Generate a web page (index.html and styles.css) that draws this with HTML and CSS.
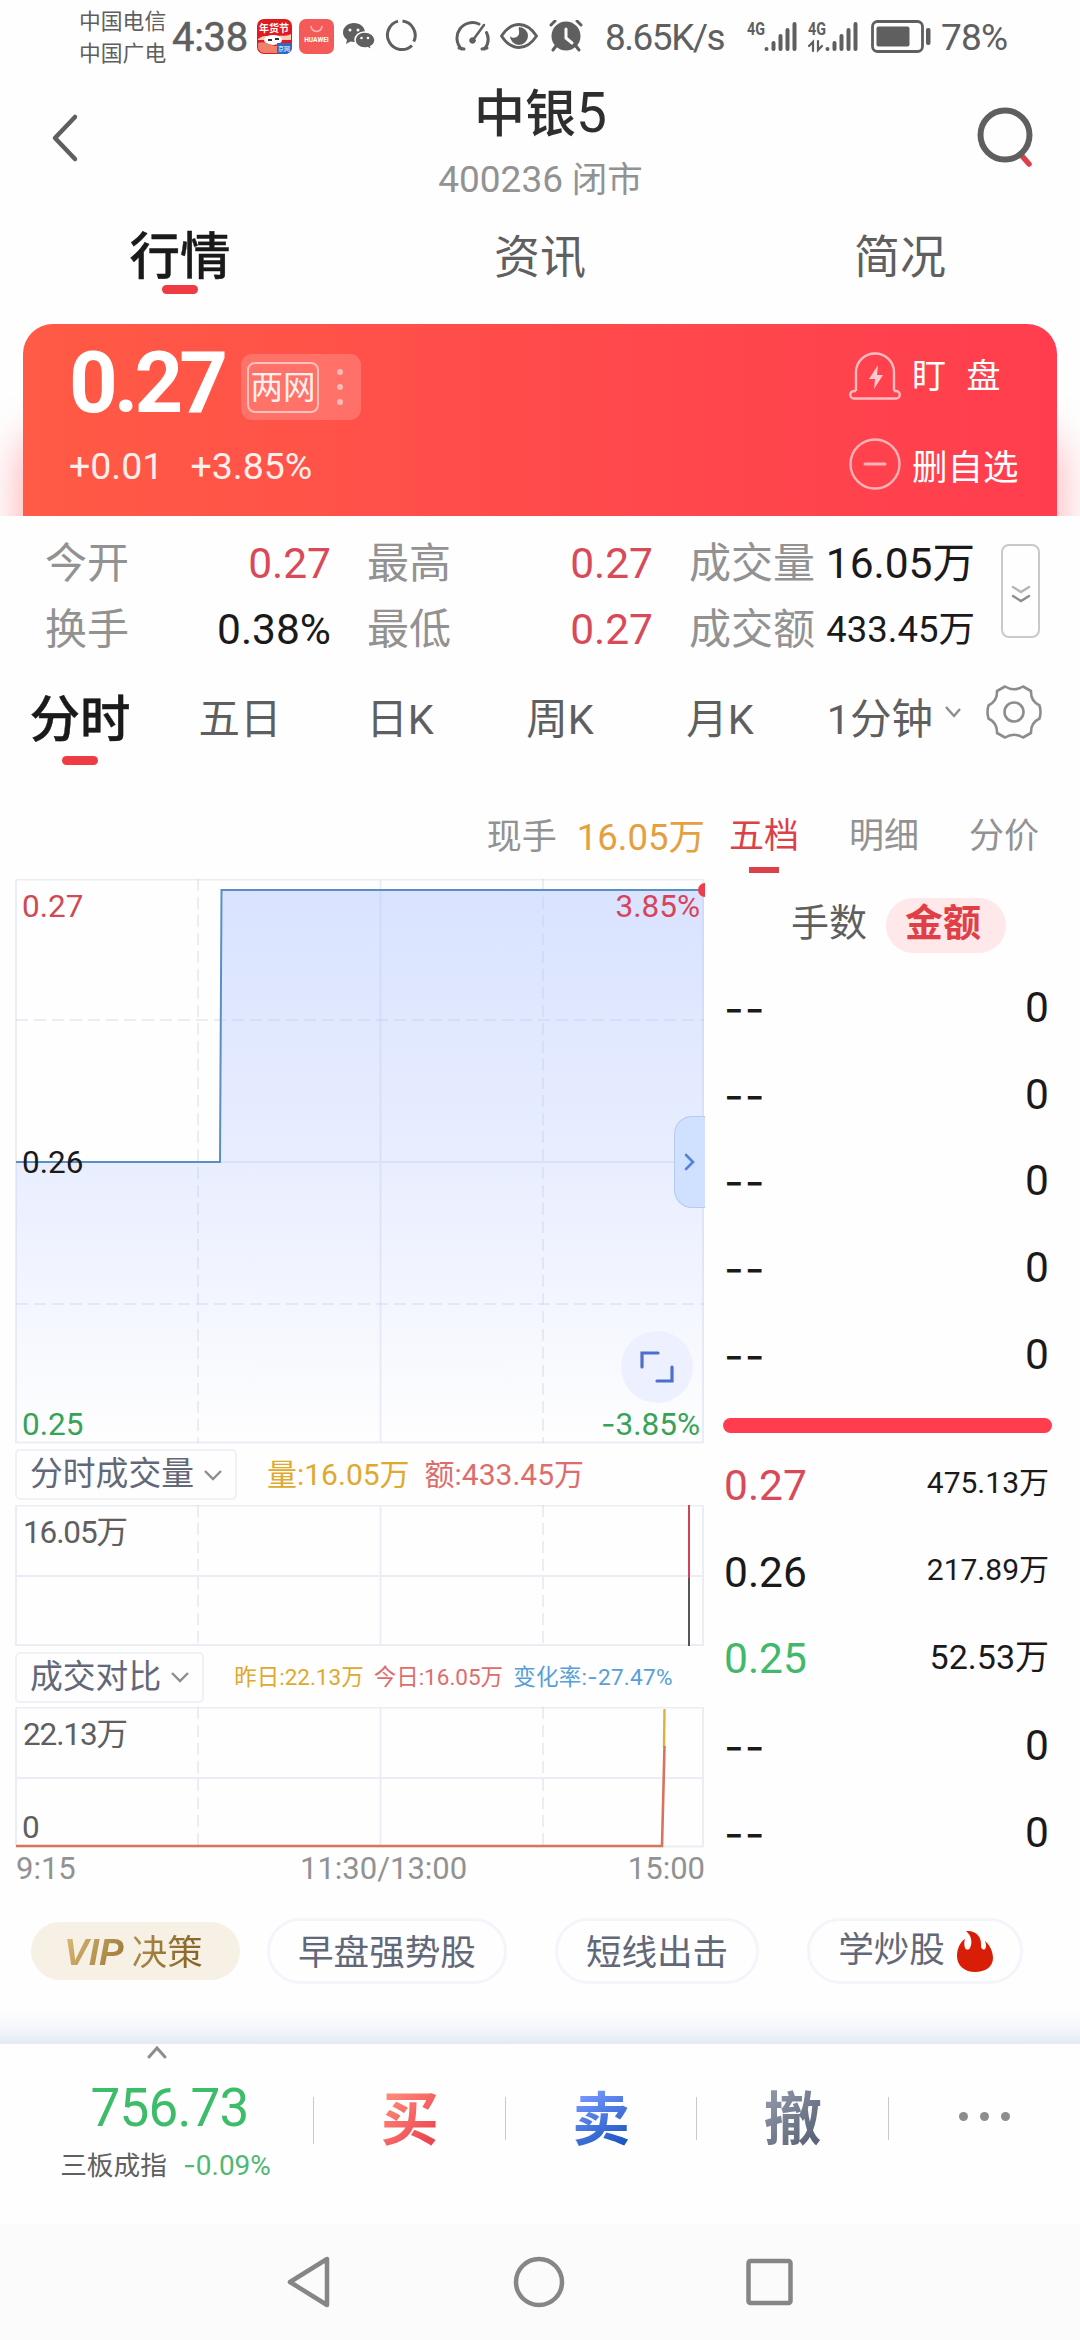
FILE: index.html
```html
<!DOCTYPE html>
<html lang="zh-CN">
<head>
  <meta charset="UTF-8">
  <meta name="viewport" content="width=device-width, initial-scale=1.0">
  <title>中银5 400236</title>
  <link rel="stylesheet" href="styles.css">
</head>
<body>
  <!-- Status bar -->
  <div class="status-bar">
    <div class="carriers"><span>中国电信</span><span>中国广电</span></div>
    <span class="clock">4:38</span>
    <svg class="app-icon" width="35" height="35" viewBox="0 0 35 35">
      <rect width="35" height="35" rx="7" fill="#e01a20"/>
      <path d="M1 20c6-5 12-2 17-3s10 1 16-2v6H1z" fill="#f9c9b8"/>
      <ellipse cx="16" cy="21" rx="9" ry="5" fill="#fff"/>
      <path d="M11 21h4M18 20h4" stroke="#333" stroke-width="2"/>
      <path d="M1 24c8-3 14 4 20 3v7H7a7 7 0 0 1-6-5z" fill="#f0806a"/>
      <path d="M20 24h15v4a7 7 0 0 1-7 7h-8z" fill="#2f67c4"/>
      <text x="17" y="13" font-size="10" font-weight="700" fill="#fff" text-anchor="middle">年货节</text>
      <text x="27" y="32" font-size="6" fill="#fff" text-anchor="middle">京网</text>
    </svg>
    <svg class="app-icon huawei" width="35" height="35" viewBox="0 0 35 35">
      <rect width="35" height="35" rx="7" fill="#f45b58"/>
      <path d="M12 7a5.500 5.500 0 0 0 11 0" fill="none" stroke="#fbb" stroke-width="1.500"/>
      <text x="17.500" y="23" font-size="6.600" font-weight="700" fill="#fff" text-anchor="middle">HUAWEI</text>
    </svg>
    <svg class="wechat" width="32" height="28" viewBox="0 0 32 28" fill="#5f5f5f">
      <path d="M11 0C4.900 0 0 4.200 0 9.500c0 3 1.500 5.500 4 7.300L3 21l4.500-2.600c1 .3 2.300.5 3.500.5C17 18.900 22 15 22 9.500S17 0 11 0z"/>
      <path d="M21.500 9C16 9 12 12.700 12 17s4 8 9.500 8c1 0 2-.1 3-.4l4.300 2.400-1-3.500c2.500-1.500 4.200-3.800 4.200-6.500 0-4.300-4.500-8-10.500-8z" stroke="#fefefe" stroke-width="1.500"/>
      <g fill="#fefefe"><circle cx="7" cy="7" r="1.500"/><circle cx="15" cy="7" r="1.500"/><circle cx="18.500" cy="15" r="1.300"/><circle cx="25" cy="15" r="1.300"/></g>
    </svg>
    <svg class="ring" width="33" height="34" viewBox="0 0 33 34" fill="none" stroke="#5f5f5f" stroke-width="3">
      <path d="M18.500 2.100A14.500 14.500 0 0 1 29.800 22.700M28 26.500A14.500 14.500 0 1 1 14 2.100"/>
    </svg>
    <svg class="speed" width="36" height="32" viewBox="0 0 36 32" fill="none" stroke="#5f5f5f" stroke-width="3" stroke-linecap="round">
      <path d="M6.500 29A15.500 15.500 0 0 1 24 4M31.500 12.500A15.500 15.500 0 0 1 29.500 29"/>
      <path d="M4 28l5 1M27 29l5-1"/>
      <path d="M18 20L29 5" stroke-width="2.500"/>
      <circle cx="17.500" cy="20.500" r="2.800" fill="#5f5f5f" stroke-width="1"/>
    </svg>
    <svg class="eye" width="38" height="26" viewBox="0 0 38 26">
      <path d="M1.500 13Q9 1.500 19 1.500T36.500 13Q29 24.500 19 24.500T1.500 13z" fill="none" stroke="#5f5f5f" stroke-width="2.800"/>
      <path d="M19 4a9 9 0 1 1-9 9c2 3 8 2 9-2 .6-3-1-5.500 0-7z" fill="#5f5f5f"/>
    </svg>
    <svg class="alarm" width="34" height="32" viewBox="0 0 34 32" stroke="#5f5f5f" stroke-width="3" stroke-linecap="round">
      <circle cx="17" cy="16" r="14.500" fill="#5f5f5f" stroke="none"/>
      <path d="M2 5l4-4M32 5l-4-4M7 26l-3 4M27 26l3 4"/>
      <path d="M17 9v9l6 5" fill="none" stroke="#fefefe"/>
    </svg>
    <span class="net-speed">8.65K/s</span>
    <svg class="signal" width="51" height="33" viewBox="0 0 51 33" stroke="#5f5f5f" stroke-width="4" stroke-linecap="round">
      <text x="0" y="15" class="net-type" textLength="18" lengthAdjust="spacingAndGlyphs">4G</text>
      <path d="M19.500 29v0M26.500 23v6M33.500 16v13M40.500 10v19M47.500 4v25"/>
    </svg>
    <svg class="signal signal-2" width="51" height="33" viewBox="0 0 51 33" stroke="#5f5f5f" stroke-width="4" stroke-linecap="round">
      <text x="0" y="15" class="net-type" textLength="18" lengthAdjust="spacingAndGlyphs">4G</text>
      <path d="M5 31V22l-4 4M10 21v9l4-4" fill="none" stroke-width="2.200"/>
      <path d="M19.500 29v0M26.500 23v6M33.500 16v13M40.500 10v19M47.500 4v25"/>
    </svg>
    <svg class="battery" width="60" height="34" viewBox="0 0 60 34">
      <rect x="1.500" y="1.500" width="50" height="30" rx="5" fill="none" stroke="#5f5f5f" stroke-width="2.800"/>
      <rect x="5.500" y="6.500" width="33" height="20" rx="2" fill="#5f5f5f"/>
      <rect x="55" y="8" width="4.500" height="17" rx="2" fill="#5f5f5f"/>
    </svg>
    <span class="battery-text">78%</span>
  </div>

  <!-- Header -->
  <header class="header">
    <svg class="back" width="30" height="50" viewBox="0 0 30 50" fill="none" stroke="#5f5f5f" stroke-width="4.500" stroke-linecap="round" stroke-linejoin="round">
      <path d="M25 4L5 25l20 21"/>
    </svg>
    <div class="title">
      <h1>中银<span>5</span></h1>
      <p><span class="num">400236</span> 闭市</p>
    </div>
    <svg class="search" width="58" height="62" viewBox="0 0 58 62" fill="none" stroke-width="6">
      <path d="M45 49l7 8" stroke="#dc4048" stroke-width="5.500" stroke-linecap="round"/>
      <circle cx="28" cy="28" r="24.500" stroke="#5f5f5f"/>
    </svg>
  </header>

  <nav class="page-tabs">
    <a class="active">行情</a>
    <a>资讯</a>
    <a>简况</a>
  </nav>

  <!-- Price card -->
  <div class="hero-wrap">
    <section class="hero">
      <div class="hero-left">
        <div class="price-row">
          <span class="price">0.27</span>
          <div class="market">
            <span class="market-name">两网</span>
            <span class="market-dots"><i></i><i></i><i></i></span>
          </div>
        </div>
        <div class="change"><span>+0.01</span><span>+3.85%</span></div>
      </div>
      <div class="hero-actions">
        <div class="action">
          <svg width="52" height="48" viewBox="0 0 52 48" fill="none" stroke="rgba(255,255,255,.65)" stroke-width="2.400" stroke-linejoin="round">
            <path d="M7 39V20a19 18.500 0 0 1 38 0v19M7 39H5a3.700 3.700 0 0 0 0 7.500h42a3.700 3.700 0 0 0 0-7.500h-2"/>
            <path d="M29 13l-9 14h6l-1 10 9-14h-6z" fill="#ffc9cd" stroke="none"/>
          </svg>
          <span class="wide">盯&nbsp;盘</span>
        </div>
        <div class="action">
          <svg width="52" height="54" viewBox="0 0 52 54" fill="none" stroke="rgba(255,255,255,.6)" stroke-width="2.400">
            <circle cx="26" cy="27" r="24.500"/>
            <path d="M16 27h20" stroke-width="3" stroke-linecap="round"/>
          </svg>
          <span>删自选</span>
        </div>
      </div>
    </section>
  </div>

  <section class="stats">
    <dl>
      <div><dt>今开</dt><dd class="up">0.27</dd></div>
      <div><dt>换手</dt><dd>0.38%</dd></div>
    </dl>
    <dl>
      <div><dt>最高</dt><dd class="up">0.27</dd></div>
      <div><dt>最低</dt><dd class="up">0.27</dd></div>
    </dl>
    <dl>
      <div><dt>成交量</dt><dd>16.05万</dd></div>
      <div><dt>成交额</dt><dd class="small">433.45万</dd></div>
    </dl>
    <button class="expand">
      <svg width="20" height="20" viewBox="0 0 20 20" fill="none" stroke-width="2.400" stroke-linecap="round">
        <path d="M2 3l8 5 8-5" stroke="#b5b5b5"/>
        <path d="M2 12l8 5 8-5" stroke="#8d8d8d"/>
      </svg>
    </button>
  </section>

  <nav class="chart-tabs">
    <a class="active">分时</a>
    <a>五日</a>
    <a>日K</a>
    <a>周K</a>
    <a>月K</a>
    <a class="minute">1分钟<svg width="16" height="14" viewBox="0 0 16 14" fill="none" stroke="#8d8d8d" stroke-width="2.400"><path d="M1 2l8 9 6-7"/></svg></a>
    <svg class="gear" width="56" height="54" viewBox="0 0 56 54" fill="none" stroke="#8d8d8d" stroke-width="2.600" stroke-linejoin="round">
      <path d="M19 1.500Q28 7 37 1.500L45 6Q44.500 16 53.500 20.500Q55.500 27 53.500 33.500Q44.500 38 45 48L37 52.500Q28 47 19 52.500L11 48Q11.500 38 2.500 33.500Q.5 27 2.500 20.500Q11.500 16 11 6z"/>
      <circle cx="28" cy="27" r="9.500"/>
    </svg>
  </nav>

  <main class="trade">
    <!-- Charts -->
    <div class="charts">
      <div class="last-volume"><span>现手</span><span class="orange">16.05万</span></div>

      <div class="chart">
        <svg width="705" height="565" viewBox="0 0 705 565">
          <defs>
            <linearGradient id="area" x1="0" y1="11" x2="0" y2="563" gradientUnits="userSpaceOnUse">
              <stop offset="0" stop-color="#d9e3ff"/>
              <stop offset=".5" stop-color="#e9eeff"/>
              <stop offset="1" stop-color="#fefefe"/>
            </linearGradient>
          </defs>
          <path d="M16 283H220L221.500 11H704V563H16z" fill="url(#area)"/>
          <g class="grid">
            <path d="M16 .5H704M16 .5V564M380.500 .5V564M703 .5V564M16 283H704M16 563.500H704"/>
            <path d="M198 0V564M543 0V564" stroke-dasharray="12 6"/>
            <path d="M16 141H704M16 425H704" stroke-dasharray="12 6"/>
          </g>
          <path d="M16 283H220L221.500 11H704" fill="none" stroke="#5a8fc6" stroke-width="2"/>
          <path d="M705 4a7 7 0 0 0 0 14z" fill="#ef3c4b"/>
          <text x="22" y="38" fill="#cf4a54">0.27</text>
          <text x="700" y="38" fill="#d9435a" text-anchor="end">3.85%</text>
          <text x="22" y="294" fill="#1a1a1a">0.26</text>
          <text x="22" y="556" fill="#36a356">0.25</text>
          <text x="700" y="556" fill="#36a356" text-anchor="end"><tspan class="minus">-</tspan>3.85%</text>
        </svg>
        <span class="drawer">
          <svg width="12" height="18" viewBox="0 0 12 18" fill="none" stroke="#5581dc" stroke-width="2.600" stroke-linecap="round"><path d="M2 2l7 7-7 7"/></svg>
        </span>
        <span class="fullscreen">
          <svg width="34" height="34" viewBox="0 0 34 34" fill="none" stroke="#4c6fcc" stroke-width="3.200" stroke-linecap="round"><path d="M2 17V3h16M32 17v14H17"/></svg>
        </span>
      </div>

      <div class="legend">
        <button class="select">分时成交量<svg width="18" height="12" viewBox="0 0 18 12" fill="none" stroke="#8d8d8d" stroke-width="2.400"><path d="M1 2l8 8 8-8"/></svg></button>
        <span class="yellow gap-wide">量:16.05万</span>
        <span class="salmon">额:433.45万</span>
      </div>
      <svg class="sub-chart" width="705" height="142" viewBox="0 0 705 142">
        <g class="grid">
          <path d="M16 .5H704M16 .5V141M380.500 .5V141M703 .5V141M16 71H704M16 140H704"/>
          <path d="M198 0V141M543 0V141" stroke-dasharray="12 6"/>
        </g>
        <path d="M689 0V73" stroke="#cf4257" stroke-width="2"/>
        <path d="M689 73V141" stroke="#555" stroke-width="2"/>
        <text x="23" y="38" fill="#5f5f5f" textLength="105">16.05万</text>
      </svg>

      <div class="legend legend-small">
        <button class="select">成交对比<svg width="18" height="12" viewBox="0 0 18 12" fill="none" stroke="#8d8d8d" stroke-width="2.400"><path d="M1 2l8 8 8-8"/></svg></button>
        <span class="yellow gap-wide">昨日:22.13万</span>
        <span class="salmon">今日:16.05万</span>
        <span class="blue">变化率:<span class="minus">-</span>27.47%</span>
      </div>
      <svg class="sub-chart" width="705" height="141" viewBox="0 0 705 141">
        <g class="grid">
          <path d="M16 .5H704M16 .5V140M380.500 .5V140M703 .5V140M16 71H704M16 139.500H704"/>
          <path d="M198 0V140M543 0V140" stroke-dasharray="12 6"/>
        </g>
        <path d="M664 40L664.500 2" stroke="#d9b43c" stroke-width="2.400"/>
        <path d="M16 139H662L664.500 39" fill="none" stroke="#d97360" stroke-width="2.600"/>
        <text x="23" y="38" fill="#5f5f5f" textLength="105">22.13万</text>
        <text x="22" y="131" fill="#5f5f5f">0</text>
      </svg>
      <div class="axis"><span>9:15</span><span>11:30/13:00</span><span>15:00</span></div>
    </div>

    <!-- Order book -->
    <aside class="book">
      <nav class="book-tabs">
        <a class="active">五档</a>
        <a>明细</a>
        <a>分价</a>
      </nav>
      <div class="unit"><span>手数</span><b>金额</b></div>
      <ul>
        <li><span class="dash">--</span><span>0</span></li>
        <li><span class="dash">--</span><span>0</span></li>
        <li><span class="dash">--</span><span>0</span></li>
        <li><span class="dash">--</span><span>0</span></li>
        <li><span class="dash">--</span><span>0</span></li>
      </ul>
      <div class="ratio"></div>
      <ul>
        <li><span class="up">0.27</span><span class="amount">475.13万</span></li>
        <li><span>0.26</span><span class="amount">217.89万</span></li>
        <li><span class="down">0.25</span><span class="amount mid">52.53万</span></li>
        <li><span class="dash">--</span><span>0</span></li>
        <li><span class="dash">--</span><span>0</span></li>
      </ul>
    </aside>
  </main>

  <!-- Quick links -->
  <div class="chips">
    <a class="chip vip"><em>VIP</em><span>决策</span></a>
    <a class="chip">早盘强势股</a>
    <a class="chip">短线出击</a>
    <a class="chip fire">学炒股
      <svg width="38" height="42" viewBox="0 0 38 42"><path d="M10 1C20 0 26 7 25 16c0 4 4 5 5 1 .4-2-.5-4-1-6 5 4 8 11 8 17 0 9-8 14-18 14S1 36 1 26C1 18 5 11 9 9c-1 3-1 6 0 9 1 2 4 2 5 0C17 12 15 5 10 1z" fill="#d81e06"/></svg>
    </a>
  </div>
  <div class="dock-shadow"></div>

  <!-- Bottom dock -->
  <footer class="dock">
    <div class="index">
      <svg width="20" height="14" viewBox="0 0 20 14" fill="none" stroke="#8d8d8d" stroke-width="3" stroke-linecap="round"><path d="M2 12l8-9 8 9"/></svg>
      <strong>756.73</strong>
      <p>三板成指<span class="rate"><span class="minus">-</span>0.09%</span></p>
    </div>
    <a class="buy">买</a>
    <a class="sell">卖</a>
    <a class="cancel">撤</a>
    <a class="more"><i></i><i></i><i></i></a>
  </footer>

  <div class="nav-bar">
    <svg width="46" height="54" viewBox="0 0 46 54"><path d="M41 4v46L4 27z"/></svg>
    <svg width="54" height="54" viewBox="0 0 54 54"><circle cx="27" cy="27" r="23"/></svg>
    <svg width="48" height="54" viewBox="0 0 48 54"><rect x="2.500" y="6" width="42" height="42" rx="2"/></svg>
  </div>
</body>
</html>
```
FILE: styles.css
```css
* {
  margin: 0;
  padding: 0;
  box-sizing: border-box;
}

body {
  width: 1080px;
  height: 2340px;
  overflow: hidden;
  background: #fefefe;
  color: #1a1a1a;
  font-family: Roboto, "Noto Sans CJK SC", sans-serif;
  display: flex;
  flex-direction: column;
}

body > * {
  flex: none;
}

svg {
  display: block;
  flex: none;
}

a {
  color: inherit;
  text-decoration: none;
}

button {
  font: inherit;
  background: none;
  border: none;
}

ul {
  list-style: none;
}

.up {
  color: #d94a58;
}

.down {
  color: #42b86c;
}

/* wider hyphen than Roboto has */
.minus {
  font-family: Inter, Roboto, sans-serif;
}

/* Status bar */
.status-bar {
  height: 74px;
  padding-left: 79px;
  display: flex;
  align-items: flex-start;
  color: #5f5f5f;
  white-space: nowrap;
}

.carriers {
  width: 93px;
  padding-top: 6px;
  display: flex;
  flex-direction: column;
  font-size: 21.8px;
  line-height: 32px;
}

.clock {
  width: 85px;
  font-size: 40px;
  line-height: 76px;
  letter-spacing: -0.3px;
  -webkit-text-stroke: 0.5px #5f5f5f;
}

.app-icon {
  margin-top: 19px;
}

.huawei {
  margin-left: 7px;
}

.wechat {
  margin: 23px 0 0 9px;
}

.ring {
  margin: 19px 0 0 9px;
}

.speed {
  margin: 20px 0 0 38px;
}

.eye {
  margin: 23px 0 0 9px;
}

.alarm {
  margin: 20px 0 0 11px;
}

.net-speed {
  width: 142px;
  margin-left: 22px;
  font-size: 37px;
  line-height: 76px;
  letter-spacing: -1.5px;
}

.signal {
  margin-top: 20px;
  overflow: visible;
}

.signal-2 {
  margin-left: 10px;
}

.net-type {
  font-size: 18px;
  font-weight: 700;
  fill: #5f5f5f;
  stroke: none;
}

.battery {
  margin: 20px 10px 0 12px;
}

.battery-text {
  font-size: 37px;
  line-height: 76px;
  letter-spacing: -0.8px;
}

/* Header */
.header {
  height: 137px;
  padding: 0 45px 0 50px;
  display: flex;
  justify-content: space-between;
}

.back {
  margin-top: 39px;
}

.title {
  padding-left: 24px;
  text-align: center;
}

.title h1 {
  font-size: 51px;
  font-weight: 500;
  line-height: 78px;
  color: #2e2e2e;
}

.title h1 span {
  font-size: 55px;
  font-weight: 400;
}

.title p {
  font-size: 35.500px;
  line-height: 52px;
  color: #929292;
}

.title .num {
  font-size: 37px;
}

.search {
  margin-top: 33px;
}

.page-tabs {
  height: 113px;
  display: flex;
  text-align: center;
  font-size: 46px;
  line-height: 92px;
  color: #5f5f5f;
}

.page-tabs a {
  flex: 1;
}

.page-tabs .active {
  font-size: 50.500px;
  font-weight: 500;
  -webkit-text-stroke: 0.4px #1a1a1a;
  color: #1a1a1a;
}

.page-tabs .active::after,
.chart-tabs .active::after {
  content: "";
  display: block;
  width: 36px;
  height: 9px;
  margin: -18px auto 0;
  border-radius: 5px;
  background: #ee3b44;
}

/* Price card */
.hero-wrap {
  height: 192px;
  padding: 0 23px;
  clip-path: inset(0);
}

.hero {
  height: 192px;
  padding: 0 39px 0 48px;
  display: flex;
  justify-content: space-between;
  border-radius: 30px 30px 0 0;
  background: linear-gradient(90deg, #ff5b45, #ff4b4b 50%, #ff3d4e);
  box-shadow: 0 110px 45px 0 rgba(255, 60, 70, 0.45);
  color: #fff;
}

.price-row {
  height: 118px;
  display: flex;
  align-items: center;
}

.price {
  width: 172px;
  margin-left: -2px;
  font-size: 85px;
  font-weight: 700;
  line-height: 116px;
  letter-spacing: -4px;
}

.market {
  width: 120px;
  height: 66px;
  margin-top: 8px;
  padding-left: 6px;
  border-radius: 11px;
  background: rgba(255, 255, 255, 0.18);
  display: flex;
  align-items: center;
}

.market-name {
  width: 72px;
  height: 51px;
  border: 2px solid rgba(255, 255, 255, 0.55);
  border-radius: 8px;
  font-size: 32.500px;
  line-height: 48px;
  text-align: center;
  color: #fff0ef;
}

.market-dots {
  margin-left: 18px;
  display: flex;
  flex-direction: column;
  gap: 9px;
}

.market-dots i {
  width: 6px;
  height: 6px;
  border-radius: 50%;
  background: #ffb9b4;
}

.change {
  display: flex;
  gap: 27px;
  margin-left: -2px;
  font-size: 37.5px;
  line-height: 48px;
  color: #ffeeec;
}

.hero-actions {
  width: 169px;
  padding-top: 28px;
}

.action {
  display: flex;
  align-items: center;
  gap: 11px;
  font-size: 35.5px;
  line-height: 48px;
  white-space: nowrap;
}

.action + .action {
  margin-top: 36px;
}

.action + .action span {
  padding-top: 8px;
}

.action .wide {
  font-size: 34px;
  word-spacing: 12px;
}

/* Day stats */
.stats {
  height: 146px;
  padding: 15px 40px 0 45px;
  display: flex;
  gap: 39px;
}

.stats dl {
  width: 283px;
  flex: none;
}

.stats dl > div {
  display: flex;
  justify-content: space-between;
  line-height: 66px;
  white-space: nowrap;
}

.stats dt {
  font-size: 42px;
  color: #929292;
}

.stats dd {
  margin-right: -3px;
  font-size: 42.5px;
}

.stats .small {
  font-size: 36.5px;
}

.expand {
  width: 39px;
  height: 94px;
  margin: 13px 0 0 -10px;
  border: 2px solid #c9c9c9;
  border-radius: 8px;
  display: flex;
  justify-content: center;
  padding-top: 38px;
}

/* Chart period tabs */
.chart-tabs {
  height: 138px;
  display: flex;
  font-size: 41.5px;
  line-height: 116px;
  text-align: center;
  color: #5f5f5f;
  white-space: nowrap;
}

.chart-tabs a {
  width: 160px;
  flex: none;
}

.chart-tabs .active {
  font-size: 50.500px;
  font-weight: 500;
  -webkit-text-stroke: 0.4px #1a1a1a;
  color: #1a1a1a;
}

.chart-tabs .active::after {
  margin-top: -22px;
}

.chart-tabs .minute {
  width: 161px;
  display: flex;
  justify-content: flex-end;
  gap: 12px;
}

.minute svg {
  margin-top: 43px;
}

.gear {
  margin: 23px 0 0 25px;
}

/* Trade area */
.trade {
  display: flex;
}

.charts {
  width: 705px;
  flex: none;
}

.last-volume {
  height: 79px;
  display: flex;
  justify-content: flex-end;
  gap: 20px;
  font-size: 35px;
  line-height: 75px;
  color: #929292;
}

.last-volume .orange {
  color: #e4a040;
  font-size: 36.5px;
}

.chart {
  position: relative;
}

.charts svg text {
  font-size: 31.5px;
}

.grid path {
  fill: none;
  stroke: rgba(190, 200, 222, 0.3);
  stroke-width: 2;
}

.drawer {
  position: absolute;
  right: 0;
  top: 237px;
  width: 31px;
  height: 92px;
  border-radius: 18px 0 0 18px;
  border: 1px solid #b5caf2;
  border-right: none;
  background: #d0e0ff;
  display: flex;
  align-items: center;
  justify-content: center;
}

.fullscreen {
  position: absolute;
  left: 621px;
  top: 452px;
  width: 72px;
  height: 72px;
  border-radius: 50%;
  background: #edf1ff;
  display: flex;
  align-items: center;
  justify-content: center;
}

.legend {
  height: 61px;
  padding: 0 0 0 15px;
  display: flex;
  align-items: center;
  gap: 15px;
  font-size: 30px;
  line-height: 40px;
  white-space: nowrap;
}

.legend-small {
  height: 60px;
  gap: 10px;
  font-size: 22.5px;
}

.select {
  height: 51px;
  padding: 0 13px 0 13px;
  border: 2px solid #eff1f5;
  border-radius: 5px;
  display: flex;
  align-items: center;
  gap: 10px;
  font-size: 32.8px;
  line-height: 49px;
  color: #626878;
}

.gap-wide {
  margin-left: 15px;
}

.legend-small .gap-wide {
  margin-left: 20px;
}

.yellow {
  color: #dfa92d;
}

.salmon {
  color: #dd6d6b;
}

.blue {
  color: #569fd8;
  letter-spacing: 0.3px;
}

.axis {
  padding: 0 0 0 16px;
  display: flex;
  font-size: 31px;
  line-height: 41px;
  height: 41px;
  color: #929292;
}

.axis span:first-child {
  width: 284px;
}

.axis span:last-child {
  margin-left: auto;
}

/* Order book */
.book {
  width: 375px;
  padding: 0 35px 0 19px;
}

.book-tabs {
  height: 74px;
  margin: 0 -38px 0 -20px;
  display: flex;
  font-size: 35px;
  line-height: 74px;
  text-align: center;
  color: #929292;
}

.book-tabs a {
  width: 120px;
}

.book-tabs .active {
  color: #dc4048;
}

.book-tabs .active::after {
  content: "";
  display: block;
  width: 30px;
  height: 6px;
  margin: -7px auto 0;
  background: #dc4048;
}

.unit {
  height: 91px;
  padding: 24px 0 0 67px;
  display: flex;
  gap: 19px;
  font-size: 38px;
  line-height: 50px;
  color: #5f5f5f;
}

.unit b {
  width: 120px;
  height: 55px;
  padding-right: 6px;
  border-radius: 28px;
  background: #fee8e9;
  color: #e03f46;
  text-align: center;
}

.book li {
  height: 86.6px;
  display: flex;
  justify-content: space-between;
  align-items: center;
  font-size: 42.5px;
  line-height: 50px;
}

.book li span:last-child {
  margin-right: -4px;
}

.book .dash {
  font-family: Inter, Roboto, sans-serif;
  font-size: 43px;
  letter-spacing: 1px;
}

.book li .amount {
  margin-top: -6px;
  font-size: 30px;
}

.book li .mid {
  margin-top: -4px;
  font-size: 34px;
}

.ratio {
  height: 15px;
  margin: 20px -7px 10px -1px;
  border-radius: 8px;
  background: #ff3d4f;
}

/* Quick links */
.chips {
  height: 123px;
  padding-left: 31px;
  display: flex;
  align-items: center;
  font-size: 35.6px;
  color: #626878;
  white-space: nowrap;
}

.chip {
  height: 66px;
  padding: 0 28px;
  border: 3px solid #f3f5fb;
  border-radius: 33px;
  line-height: 65px;
}

.chip + .chip {
  margin-left: 48px;
}

.chip.vip {
  width: 209px;
  height: 58px;
  padding: 0 0 0 33px;
  border: none;
  background: #f7f1e5;
  display: flex;
  gap: 6px;
  font-size: 35.5px;
  line-height: 62px;
}

.chip.vip + .chip {
  margin-left: 27px;
}

.vip em {
  padding-right: 2px;
  font-family: "Liberation Sans", sans-serif;
  font-weight: 700;
  font-size: 37px;
  background: linear-gradient(120deg, #e3c281, #8f6e2b);
  -webkit-background-clip: text;
  background-clip: text;
  color: transparent;
}

.vip span {
  background: linear-gradient(100deg, #b08d49, #7f6024);
  -webkit-background-clip: text;
  background-clip: text;
  color: transparent;
}

.chip.fire {
  display: flex;
  align-items: center;
  gap: 11px;
  padding-right: 26px;
}

.dock-shadow {
  height: 32px;
  background: linear-gradient(#fefefe, #f1f4fa 60%, #e3eaf3);
}

/* Bottom dock */
.dock {
  height: 180px;
  display: flex;
}

.index {
  width: 314px;
  padding-top: 1px;
  display: flex;
  flex-direction: column;
  align-items: center;
}

.index strong {
  margin: 18px 0 0 25px;
  font-size: 53px;
  font-weight: 400;
  line-height: 62px;
  letter-spacing: -0.8px;
  color: #3dbc69;
}

.index p {
  margin: 8px 0 0 17px;
  font-size: 26.7px;
  line-height: 36px;
  color: #5f5f5f;
}

.index .rate {
  margin-left: 16px;
  font-size: 28px;
  color: #4fb873;
}

.dock a {
  flex: 1;
  margin-top: 53px;
  height: 43px;
  font-size: 58px;
  font-weight: 700;
  line-height: 43px;
  text-align: center;
  color: transparent;
}

.dock a.buy,
.dock a.sell,
.dock a.cancel {
  height: 70px;
  margin-top: 40px;
  line-height: 73px;
  -webkit-background-clip: text;
  background-clip: text;
}

.dock a.buy {
  background-image: linear-gradient(135deg, #ff8576 35%, #ec4650 65%);
}

.dock a.sell {
  background-image: linear-gradient(150deg, #7797ff 30%, #1c56c0 70%);
}

.dock a.cancel {
  background-image: linear-gradient(135deg, #8a92a4 35%, #5d6678 65%);
}

/* divider lines */
.index,
.buy,
.sell,
.cancel {
  position: relative;
}

.index::after,
.buy::after,
.sell::after,
.cancel::after {
  content: "";
  position: absolute;
  right: 0;
  top: 13px;
  width: 1px;
  height: 43px;
  background: #c9c9c9;
}

.index::after {
  top: 53px;
  height: 47px;
}

.dock a.more {
  display: flex;
  justify-content: center;
  gap: 12px;
  padding: 15px 0 0 0;
}

.more i {
  width: 9px;
  height: 9px;
  border-radius: 50%;
  background: #8d8d8d;
}

/* System navigation */
.nav-bar {
  height: 116px;
  padding: 0 286px 0 286px;
  background: #fbfbfb;
  display: flex;
  justify-content: space-between;
  align-items: center;
}

.nav-bar svg {
  fill: none;
  stroke: #868686;
  stroke-width: 4.500px;
  stroke-linejoin: round;
}
```
